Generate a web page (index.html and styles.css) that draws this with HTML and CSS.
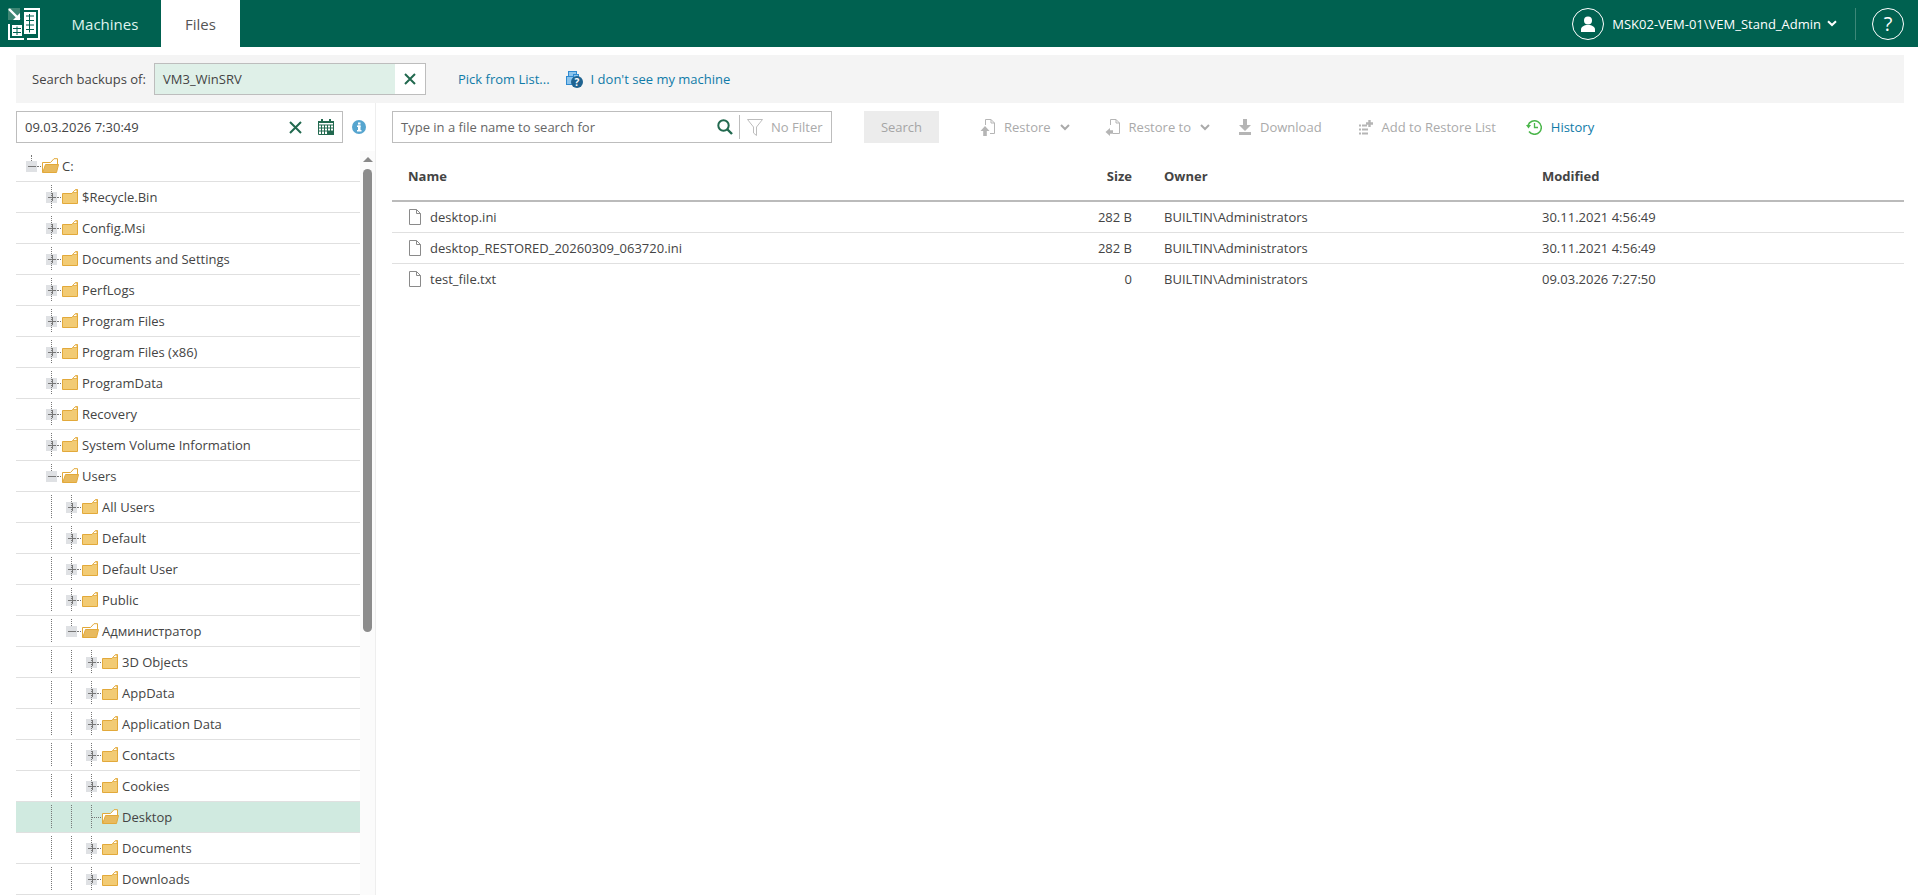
FILE: index.html
```html
<!DOCTYPE html>
<html lang="en">
<head>
<meta charset="utf-8">
<title>Files</title>
<link rel="stylesheet" href="styles.css">
</head>
<body>
<svg class="defs" width="0" height="0" aria-hidden="true">
  <symbol id="folder" viewBox="0 0 16 15">
    <path d="M.5 14.500V4.500H10L11 3.500 13 1 15.500 .5V14.500Z" fill="#f2cb74" stroke="#e2a93a"/>
    <path d="M10.500 3.500 13 1H15V3.500Z" fill="#fff" stroke="#e2a93a" stroke-width=".8"/>
  </symbol>
  <symbol id="folder-open" viewBox="0 0 17 15">
    <path d="M.5 14.500V4.500H8.500L12 .7H15.500V6" fill="#fff" stroke="#e2a93a"/>
    <path d="M.7 14.500 3.500 6.500H16.500L14.500 14.500Z" fill="#e8ba5e" stroke="#e2a93a"/>
  </symbol>
  <symbol id="file" viewBox="0 0 14 16">
    <path d="M1.500 .5H8.500L12.500 4.500V15.500H1.500ZM8.500 .5V4.500H12.500" fill="#fff" stroke="#8a8a8a"/>
  </symbol>
</svg>

<header class="topbar">
  <svg class="logo" width="32" height="32" viewBox="0 0 32 32">
    <rect x="0" y="0" width="12" height="12" fill="#3f8674"/>
    <path d="M1 1 11.500 11.500" stroke="#fff" stroke-width="2.400" fill="none"/>
    <path d="M12 5V12H5Z" fill="#fff"/>
    <path d="M16 1H31V31H19" stroke="#fff" stroke-width="2" fill="none"/>
    <path d="M1 16V31H16" stroke="#fff" stroke-width="2" fill="none"/>
    <rect x="16" y="4" width="12" height="22" fill="#fff"/>
    <path d="M18 8H26M18 12.500H26M18 17H26M18 21.500H26M21.500 6V24.500" stroke="#006150" stroke-width="1" fill="none"/>
    <rect x="4" y="17" width="10" height="11" fill="#fff"/>
    <path d="M5 20.500H13M5 24.500H13M9 18.500V27" stroke="#006150" stroke-width="1" fill="none"/>
  </svg>
  <nav class="tabs">
    <a class="tab">Machines</a>
    <a class="tab tab-active">Files</a>
  </nav>
  <div class="user">
    <span class="round">
      <svg width="16" height="16" viewBox="0 0 16 16"><circle cx="8" cy="4.500" r="4" fill="#fff"/><path d="M1 16V13.500C1 11 4 9.500 6 9H10C12 9.500 15 11 15 13.500V16Z" fill="#fff"/></svg>
    </span>
    <span class="user-name">MSK02-VEM-01\VEM_Stand_Admin</span>
    <svg class="user-chev" width="10" height="7" viewBox="0 0 10 7"><path d="M1 1.200 5 5 9 1.200" fill="none" stroke="#fff" stroke-width="2"/></svg>
    <span class="user-sep"></span>
    <span class="round round-help">?</span>
  </div>
</header>

<section class="searchbar">
  <label class="search-label">Search backups of:</label>
  <div class="machine">
    <span class="machine-value">VM3_WinSRV</span>
    <span class="machine-clear">
      <svg width="12" height="12" viewBox="0 0 12 12"><path d="M1 1 11 11M11 1 1 11" stroke="#22694f" stroke-width="2"/></svg>
    </span>
  </div>
  <a class="link link-pick">Pick from List...</a>
  <svg class="machine-icon" width="17" height="17" viewBox="0 0 17 17">
    <rect x="2.500" y=".5" width="8" height="6" fill="#8cc4ec" stroke="#2f8ad0"/>
    <rect x=".5" y="5.500" width="7" height="8" fill="#8cc4ec" stroke="#2f8ad0"/>
    <rect x="7.500" y="3.500" width="5" height="5" fill="#8cc4ec" stroke="#2f8ad0"/>
    <circle cx="11" cy="11" r="6" fill="#1f6390"/>
    <text x="11" y="15" class="machine-q">?</text>
  </svg>
  <a class="link">I don't see my machine</a>
</section>

<main class="content">
  <aside class="side">
    <div class="date-row">
      <div class="date-box">
        <span class="date-value">09.03.2026 7:30:49</span>
        <svg class="date-x" width="13" height="13" viewBox="0 0 13 13"><path d="M1 1 12 12M12 1 1 12" stroke="#22694f" stroke-width="2"/></svg>
        <svg width="16" height="16" viewBox="0 0 16 16"><path d="M.5 2.500H15.500V15.500H.5ZM.5 6H15.500M.5 9H15.500M.5 12H15.500M3.500 6V15.500M6.500 6V15.500M9.500 6V15.500M12.500 6V15.500" fill="none" stroke="#22694f"/><rect x="3" y="0" width="2" height="4" fill="#22694f"/><rect x="11" y="0" width="2" height="4" fill="#22694f"/><rect x="10" y="12" width="6" height="4" fill="#22694f"/><rect x="0" y="2" width="16" height="2" fill="#22694f"/></svg>
      </div>
      <svg class="info" width="14" height="14" viewBox="0 0 14 14"><circle cx="7" cy="7" r="7" fill="#56a5cf"/><rect x="5" y="5.500" width="3.500" height="1.500" fill="#fff"/><rect x="6" y="5.500" width="2.500" height="5.500" fill="#fff"/><rect x="5" y="10" width="4.500" height="1.500" fill="#fff"/><rect x="6" y="2.500" width="2.500" height="2" fill="#fff"/></svg>
    </div>
    <div class="tree-wrap">
      <ul class="tree">
        <li class="node node-root"><span class="toggle toggle-open"></span><svg class="ico-open"><use href="#folder-open"/></svg><span class="label">C:</span></li>
        <li class="node"><span class="toggle"></span><svg class="ico"><use href="#folder"/></svg><span class="label">$Recycle.Bin</span></li>
        <li class="node"><span class="toggle"></span><svg class="ico"><use href="#folder"/></svg><span class="label">Config.Msi</span></li>
        <li class="node"><span class="toggle"></span><svg class="ico"><use href="#folder"/></svg><span class="label">Documents and Settings</span></li>
        <li class="node"><span class="toggle"></span><svg class="ico"><use href="#folder"/></svg><span class="label">PerfLogs</span></li>
        <li class="node"><span class="toggle"></span><svg class="ico"><use href="#folder"/></svg><span class="label">Program Files</span></li>
        <li class="node"><span class="toggle"></span><svg class="ico"><use href="#folder"/></svg><span class="label">Program Files (x86)</span></li>
        <li class="node"><span class="toggle"></span><svg class="ico"><use href="#folder"/></svg><span class="label">ProgramData</span></li>
        <li class="node"><span class="toggle"></span><svg class="ico"><use href="#folder"/></svg><span class="label">Recovery</span></li>
        <li class="node"><span class="toggle"></span><svg class="ico"><use href="#folder"/></svg><span class="label">System Volume Information</span></li>
        <li class="node"><span class="toggle toggle-open"></span><svg class="ico-open"><use href="#folder-open"/></svg><span class="label">Users</span></li>
        <li class="node"><i class="guide"></i><span class="toggle"></span><svg class="ico"><use href="#folder"/></svg><span class="label">All Users</span></li>
        <li class="node"><i class="guide"></i><span class="toggle"></span><svg class="ico"><use href="#folder"/></svg><span class="label">Default</span></li>
        <li class="node"><i class="guide"></i><span class="toggle"></span><svg class="ico"><use href="#folder"/></svg><span class="label">Default User</span></li>
        <li class="node"><i class="guide"></i><span class="toggle"></span><svg class="ico"><use href="#folder"/></svg><span class="label">Public</span></li>
        <li class="node"><i class="guide"></i><span class="toggle toggle-open"></span><svg class="ico-open"><use href="#folder-open"/></svg><span class="label">Администратор</span></li>
        <li class="node"><i class="guide"></i><i class="guide"></i><span class="toggle"></span><svg class="ico"><use href="#folder"/></svg><span class="label">3D Objects</span></li>
        <li class="node"><i class="guide"></i><i class="guide"></i><span class="toggle"></span><svg class="ico"><use href="#folder"/></svg><span class="label">AppData</span></li>
        <li class="node"><i class="guide"></i><i class="guide"></i><span class="toggle"></span><svg class="ico"><use href="#folder"/></svg><span class="label">Application Data</span></li>
        <li class="node"><i class="guide"></i><i class="guide"></i><span class="toggle"></span><svg class="ico"><use href="#folder"/></svg><span class="label">Contacts</span></li>
        <li class="node"><i class="guide"></i><i class="guide"></i><span class="toggle"></span><svg class="ico"><use href="#folder"/></svg><span class="label">Cookies</span></li>
        <li class="node node-selected"><i class="guide"></i><i class="guide"></i><span class="toggle toggle-leaf"></span><svg class="ico-open"><use href="#folder-open"/></svg><span class="label">Desktop</span></li>
        <li class="node"><i class="guide"></i><i class="guide"></i><span class="toggle"></span><svg class="ico"><use href="#folder"/></svg><span class="label">Documents</span></li>
        <li class="node"><i class="guide"></i><i class="guide"></i><span class="toggle"></span><svg class="ico"><use href="#folder"/></svg><span class="label">Downloads</span></li>
      </ul>
      <div class="scrollbar">
        <span class="scroll-up"></span>
        <span class="scroll-thumb"></span>
      </div>
    </div>
  </aside>

  <section class="main">
    <div class="toolbar">
      <div class="file-search">
        <span class="file-search-text">Type in a file name to search for</span>
        <svg class="mag" width="16" height="16" viewBox="0 0 16 16"><circle cx="6.500" cy="6.500" r="5.200" fill="none" stroke="#22694f" stroke-width="2"/><path d="M10.500 10.500 15 15" stroke="#22694f" stroke-width="2.400"/></svg>
        <span class="filter">
          <svg width="16" height="17" viewBox="0 0 16 17"><path d="M.5 .5H15.500L9.500 8V16.500L6.500 14V8Z" fill="#fff" stroke="#bdbdbd"/></svg>
          <span class="filter-text">No Filter</span>
        </span>
      </div>
      <button class="search-btn">Search</button>
      <div class="actions">
        <a class="act act-restore">
          <svg width="15" height="17" viewBox="0 0 15 17"><path d="M5.500 6V.5H11L14.500 4V14.500H10M11 .5V4H14.500" fill="none" stroke="#b5b5b5"/><path d="M5 7 9.500 12H6.800V17H3.200V12H.5Z" fill="#b5b5b5"/></svg>
          <span>Restore</span>
          <svg class="chev" width="10" height="7" viewBox="0 0 10 7"><path d="M1 1 5 5 9 1" fill="none" stroke="#aaa" stroke-width="2"/></svg>
        </a>
        <a class="act act-restore-to">
          <svg width="15" height="17" viewBox="0 0 15 17"><path d="M5.500 6V.5H11L14.500 4V14.500H8M11 .5V4H14.500" fill="none" stroke="#b5b5b5"/><path d="M5 9 .5 13 5 17V14.800H8V11.200H5Z" fill="#b5b5b5"/></svg>
          <span>Restore to</span>
          <svg class="chev" width="10" height="7" viewBox="0 0 10 7"><path d="M1 1 5 5 9 1" fill="none" stroke="#aaa" stroke-width="2"/></svg>
        </a>
        <a class="act act-download">
          <svg width="12" height="16" viewBox="0 0 12 16"><path d="M4 0H8V6H12L6 12 0 6H4Z" fill="#b5b5b5"/><rect y="13" width="12" height="3" fill="#b5b5b5"/></svg>
          <span>Download</span>
        </a>
        <a class="act act-add">
          <svg width="14" height="15" viewBox="0 0 14 15"><path d="M0 5.500H2M3 5.500H8M0 9.500H2M3 9.500H9M0 13.500H2M3 13.500H9" stroke="#b5b5b5" stroke-width="2"/><path d="M10.500 0V7M7 3.500H14" stroke="#b5b5b5" stroke-width="2.400"/></svg>
          <span>Add to Restore List</span>
        </a>
        <a class="act act-history">
          <svg width="16" height="16" viewBox="0 0 16 16"><path d="M2 6.500A6.800 6.800 0 1 1 3 12.500" fill="none" stroke="#4bb64b" stroke-width="1.500"/><path d="M0 6H5L2.500 9.500Z" fill="#4bb64b"/><path d="M8.500 4V8.500H12" fill="none" stroke="#4bb64b" stroke-width="1.300"/></svg>
          <span>History</span>
        </a>
      </div>
    </div>
    <div class="grid grid-head">
      <span class="cell">Name</span>
      <span class="cell cell-right">Size</span>
      <span class="cell">Owner</span>
      <span class="cell">Modified</span>
    </div>
    <div class="grid grid-row">
      <span class="cell cell-name"><svg class="file-ico"><use href="#file"/></svg>desktop.ini</span>
      <span class="cell cell-right">282 B</span>
      <span class="cell">BUILTIN\Administrators</span>
      <span class="cell">30.11.2021 4:56:49</span>
    </div>
    <div class="grid grid-row">
      <span class="cell cell-name"><svg class="file-ico"><use href="#file"/></svg>desktop_RESTORED_20260309_063720.ini</span>
      <span class="cell cell-right">282 B</span>
      <span class="cell">BUILTIN\Administrators</span>
      <span class="cell">30.11.2021 4:56:49</span>
    </div>
    <div class="grid grid-row grid-last">
      <span class="cell cell-name"><svg class="file-ico"><use href="#file"/></svg>test_file.txt</span>
      <span class="cell cell-right">0</span>
      <span class="cell">BUILTIN\Administrators</span>
      <span class="cell">09.03.2026 7:27:50</span>
    </div>
  </section>
</main>
</body>
</html>
```
FILE: styles.css
```css
* { box-sizing: border-box; }
html, body { margin: 0; height: 100%; }
body {
  height: 895px;
  overflow: hidden;
  background: #fff;
  color: #444;
  font: 13px/18px "Open Sans", sans-serif;
}
.defs { display: block; height: 0; }

/* top bar */
.topbar {
  display: flex;
  align-items: center;
  height: 47px;
  background: #006150;
  color: #fff;
}
.logo { margin-left: 8px; flex: none; }
.tabs { display: flex; align-self: stretch; margin-left: 23px; }
.tab {
  display: flex;
  align-items: center;
  justify-content: center;
  font-size: 15px;
  color: #dff3ee;
  width: 84px;
}
.tab-active {
  width: 79px;
  margin-left: 14px;
  background: #fff;
  color: #555;
}
.user { display: flex; align-items: center; margin-left: auto; margin-right: 14px; }
.round {
  display: flex;
  align-items: center;
  justify-content: center;
  width: 32px;
  height: 32px;
  border: 1.5px solid #fff;
  border-radius: 50%;
}
.round-help { font-size: 20px; }
.user-name { margin-left: 8px; font-size: 13px; white-space: nowrap; }
.user-chev { margin-left: 6px; }
.user-sep { width: 1px; height: 32px; margin: 0 16px 0 18px; background: #3d8778; }

/* search strip */
.searchbar {
  display: flex;
  align-items: center;
  height: 48px;
  margin: 8px 14px 0 16px;
  padding-left: 16px;
  background: #f4f4f4;
}
.search-label { width: 122px; color: #444; }
.machine {
  display: flex;
  width: 272px;
  height: 32px;
  border: 1px solid #bdbdbd;
  background: #fff;
}
.machine-value {
  flex: 1;
  padding-left: 8px;
  line-height: 30px;
  background: #dff0e8;
}
.machine-clear { display: flex; align-items: center; justify-content: center; width: 30px; }
.link { color: #107ba8; }
.link-pick { margin-left: 32px; }
.machine-icon { margin: 0 8px 0 16px; }
.machine-q { font: bold 10px "Open Sans", sans-serif; fill: #fff; text-anchor: middle; }

/* content */
.content { display: flex; height: 792px; margin-left: 16px; margin-right: 14px; }
.side { display: flex; flex-direction: column; width: 360px; flex: none; border-right: 1px solid #eee; }
.date-row { display: flex; align-items: center; height: 32px; margin-top: 8px; }
.date-box {
  display: flex;
  align-items: center;
  width: 327px;
  height: 32px;
  padding: 0 8px;
  border: 1px solid #bdbdbd;
}
.date-value { flex: 1; }
.date-x { margin-right: 16px; }
.info { margin-left: 9px; }
.tree-wrap { display: flex; margin-top: 8px; height: 744px; }
.tree { flex: none; width: 344px; margin: 0; padding: 0; list-style: none; }
.node {
  display: flex;
  align-items: center;
  height: 31px;
  padding-left: 30px;
  border-bottom: 1px solid #e0e0e0;
  white-space: nowrap;
}
.node-root { padding-left: 10px; }
.node-selected { background: #d0eae0; }
.guide {
  position: relative;
  flex: none;
  width: 20px;
  align-self: stretch;
}
.guide::before {
  content: "";
  position: absolute;
  left: 5px;
  top: 3px;
  bottom: 4px;
  border-left: 1px dotted #777;
}
.toggle {
  position: relative;
  flex: none;
  align-self: stretch;
  width: 12px;
  margin-right: 4px;
  --c: #dfe1e4;
  background:
    linear-gradient(#777, #777) 2px 14.500px / 8px 1px no-repeat,
    linear-gradient(#777, #777) 5.500px 11px / 1px 8px no-repeat,
    linear-gradient(var(--c), var(--c)) 0 9.500px / 11px 11px no-repeat;
}
.toggle-open {
  background:
    linear-gradient(#777, #777) 2px 14.500px / 8px 1px no-repeat,
    linear-gradient(var(--c), var(--c)) 0 9.500px / 11px 11px no-repeat;
}
.toggle::before {
  content: "";
  position: absolute;
  left: 5px;
  top: 3px;
  bottom: 4px;
  border-left: 1px dotted #777;
}
.toggle-open::before { bottom: 20px; }
.node-root .toggle::before { top: 4px; }
.toggle::after {
  content: "";
  position: absolute;
  left: 11px;
  top: 15px;
  width: 4px;
  border-top: 1px dotted #777;
}
.toggle-leaf { background: none; }
.toggle-leaf::after { left: 6px; width: 9px; }
.ico { width: 16px; height: 15px; flex: none; margin-top: -1px; }
.ico-open { width: 17px; height: 15px; flex: none; margin-top: -1px; margin-right: -1px; }
.label { margin-left: 4px; }
.scrollbar { flex: 1; background: #fbfbfb; }
.scroll-up {
  display: block;
  width: 0;
  margin: 6px 0 0 3px;
  border: 5px solid transparent;
  border-top: 0;
  border-bottom-color: #888;
}
.scroll-thumb {
  display: block;
  width: 9px;
  height: 463px;
  margin: 7px 0 0 3px;
  border-radius: 5px;
  background: #8c8c8c;
}

.main { flex: 1; min-width: 0; padding-left: 16px; }
.toolbar { display: flex; align-items: center; height: 32px; margin-top: 8px; }
.file-search {
  display: flex;
  align-items: center;
  width: 440px;
  height: 32px;
  padding-left: 8px;
  border: 1px solid #bdbdbd;
  color: #666;
}
.file-search-text { flex: 1; }
.mag { margin-right: 6px; }
.filter {
  display: flex;
  align-items: center;
  width: 92px;
  height: 24px;
  padding-left: 7px;
  border-left: 1px solid #bdbdbd;
  color: #aaa;
}
.filter-text { margin-left: 8px; }
.search-btn {
  width: 75px;
  height: 32px;
  margin-left: 32px;
  padding: 0;
  border: 0;
  background: #ececec;
  color: #a5a5a5;
  font: inherit;
}
.actions { display: flex; align-items: center; margin-left: 41px; }
.act { display: flex; align-items: center; color: #aaa; white-space: nowrap; }
.act span { margin-left: 9px; }
.chev { margin-left: 9px; }
.act-restore-to { margin-left: 35px; }
.act-download { margin-left: 29px; }
.act-add { margin-left: 37px; }
.act-history { margin-left: 30px; color: #107ba8; }

.grid {
  display: grid;
  grid-template-columns: minmax(0, 1fr) 100px 378px 378px;
  align-items: center;
}
.grid-head {
  height: 59px;
  border-bottom: 2px solid #bbb;
  font-weight: 700;
  padding-top: 9px;
}
.grid-row { height: 31px; border-bottom: 1px solid #e0e0e0; }
.grid-last { border-bottom-color: transparent; }
.cell { padding: 0 16px; white-space: nowrap; }
.cell-right { text-align: right; }
.cell-name { display: flex; align-items: center; }
.file-ico { width: 14px; height: 16px; margin-right: 8px; flex: none; }
```
